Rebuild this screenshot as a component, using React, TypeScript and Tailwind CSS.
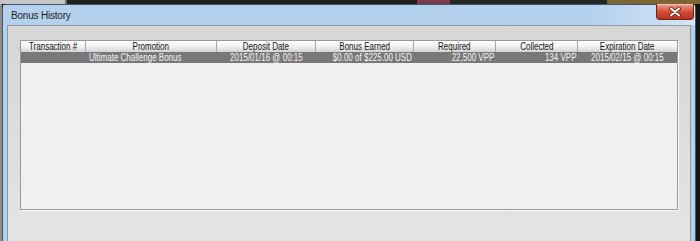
import React from 'react';

const cols = [
  { name: 'Transaction #', value: '', align: 'center' },
  { name: 'Promotion', value: 'Ultimate Challenge Bonus', align: 'left' },
  { name: 'Deposit Date', value: '2015/01/16 @ 00:15', align: 'center' },
  { name: 'Bonus Earned', value: '$0.00 of $225.00 USD', align: 'right' },
  { name: 'Required', value: '22,500 VPP', align: 'right' },
  { name: 'Collected', value: '134 VPP', align: 'right' },
  { name: 'Expiration Date', value: '2015/02/15 @ 00:15', align: 'center' },
];

const alignClass: Record<string, string> = {
  left: 'justify-start pl-[3px]',
  center: 'justify-center',
  right: 'justify-end pr-[2px]',
};

const originClass: Record<string, string> = {
  left: 'origin-left',
  center: 'origin-center',
  right: 'origin-right',
};

function CloseButton() {
  return (
    <div className="absolute right-[1px] top-[-1px] w-[38px] h-[16px] rounded-b-[4px] border border-t-0 border-[#6e2418] bg-gradient-to-b from-[#e9a18f] via-[#d24f36] to-[#b8321e] flex items-center justify-center shadow-[inset_0_1px_0_rgba(255,255,255,0.4)]">
      <svg width="12" height="10" viewBox="0 0 12 10">
        <path d="M2 1.5 L10 8.5 M10 1.5 L2 8.5" stroke="#5a1a10" strokeWidth="3.6" strokeLinecap="round" />
        <path d="M2 1.5 L10 8.5 M10 1.5 L2 8.5" stroke="#ffffff" strokeWidth="2" strokeLinecap="round" />
      </svg>
    </div>
  );
}

export default function App() {
  return (
    <div className="w-[700px] h-[241px] overflow-hidden bg-[#1c1c1c] flex flex-col">
      {/* desktop behind the dialog */}
      <div className="h-[4px] flex shrink-0">
        <div className="w-[65px] bg-[#c4c4c4]" />
        <div className="w-[2px] bg-[#6a6a6a]" />
        <div className="w-[350px] bg-[#1e1e1e]" />
        <div className="w-[33px] bg-[#7a3c4a]" />
        <div className="w-[157px] bg-[#262626]" />
        <div className="flex-1 bg-[#7d6535]" />
      </div>

      <div className="flex flex-1">
        <div className="w-[2px] bg-[#8c8c8c]" />
        {/* window */}
        <div className="relative w-[694px] border border-b-0 border-[#45566a] rounded-t-[5px] bg-[#b3d1ed] flex flex-col px-[4px]">
          <div className="h-[20px] shrink-0 flex items-center bg-gradient-to-r from-[#b3d1ed] via-[#b3d1ed] via-85% to-[#d4e5f6] -mx-[4px] px-[8px]">
            <span className="font-['Liberation_Sans',Arial,sans-serif] text-[10px] tracking-[-0.2px] text-[#1e1e1e] leading-none mt-[2px]">
              Bonus History
            </span>
          </div>
          <CloseButton />

          {/* client area */}
          <div className="flex-1 border border-b-0 border-[#8f9aa6] bg-gradient-to-b from-[#d6d6d6] to-[#e4e4e4] pl-[12px] pt-[14px]">
            <div className="w-[658px] h-[170px] border border-[#9a9a9a] bg-[#f0f0f0] shadow-[1px_1px_0_#f8f8f8] font-['Liberation_Sans',Arial,sans-serif] text-[10px] leading-none">
              <div className="grid grid-cols-[65px_131px_99px_98px_82px_82px_99px] h-[11px] bg-gradient-to-b from-[#fdfdfd] via-[#f1f1f1] to-[#d3d3d3]">
                {cols.map((c, i) => (
                  <div
                    key={c.name}
                    className={`flex items-center justify-center text-[#141414] whitespace-nowrap ${i < cols.length - 1 ? 'border-r border-[#a6a6a6]' : ''}`}
                  >
                    <span className="inline-block scale-x-[0.8] origin-center">{c.name}</span>
                  </div>
                ))}
              </div>
              <div className="grid grid-cols-[65px_131px_99px_98px_82px_82px_99px] h-[11px] bg-[#787878]">
                {cols.map((c) => (
                  <div key={c.name} className={`flex items-center text-[#f4f4f4] whitespace-nowrap ${alignClass[c.align]}`}>
                    <span className={`inline-block scale-x-[0.8] ${originClass[c.align]}`}>{c.value}</span>
                  </div>
                ))}
              </div>
            </div>
          </div>
        </div>
        <div className="flex-1 bg-[#141414]" />
      </div>
    </div>
  );
}
